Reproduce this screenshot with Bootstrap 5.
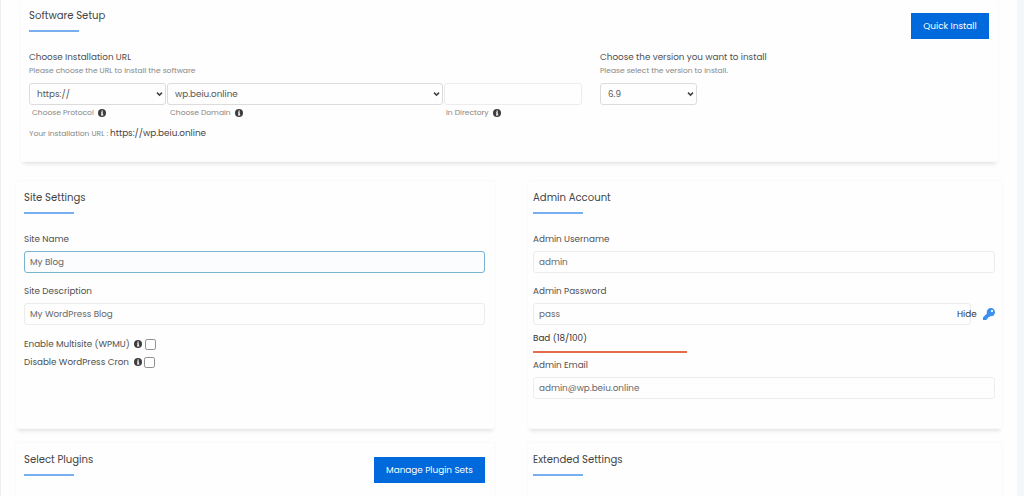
<!DOCTYPE html>
<html lang="en">
<head>
<meta charset="utf-8">
<meta name="viewport" content="width=device-width, initial-scale=1">
<title>Software Setup</title>
<link href="https://cdn.jsdelivr.net/npm/bootstrap@5.3.0/dist/css/bootstrap.min.css" rel="stylesheet">
<style>
  body { font-family: Poppins, Inter, "Open Sans", sans-serif; font-size: 8.8px; color: #505050; background: #f3f7fc; height: 496px; overflow: hidden; }
  .page { width: 1017px; height: 496px; background: #fefefe; border-left: 1px solid #eee; overflow: hidden; }
  .panel { background: #fefefe; border: 1px solid #fafafa; border-radius: 3px; box-shadow: 0 5px 4px -3px rgba(0,0,0,.11); }
  .setup { width: 979px; height: 162px; margin-left: 19px; padding: 8px 9px 0 8px; border-top: 0; }
  .pair { margin: 18px 0 0 14px; gap: 31px; }
  .pair .panel { height: 249px; padding: 9px 10px 0 8px; }
  .pair .panel:first-child { width: 481px; padding-right: 10px; }
  .pair .panel:last-child { width: 476px; padding: 9px 7px 0 5px; }
  .pair.lower { margin-top: 13px; }
  .title { font-size: 10.1px; font-weight: 400; line-height: 15px; margin: 0; color: #444; }
  .title::after { content: ""; display: block; width: 50px; height: 2px; margin-top: 7px; background: #77aef0; }
  .lbl { font-size: 8.8px; line-height: 14px; display: block; }
  .hint { font-size: 7.55px; line-height: 12px; color: #868686; }
  .form-control, .form-select { font-size: 8.8px; line-height: 14px; height: 22px; min-height: 0; padding: 3px 5px; color: #686868; background-color: #fefefe; border: 1px solid #ececec; border-radius: 3px; }
  .form-select { padding-left: 7px; color: #555; border-color: #dcdcdc; background-size: 7px 6px; background-position: right 2px center;
    background-image: url("data:image/svg+xml,%3Csvg xmlns='http://www.w3.org/2000/svg' viewBox='0 0 7 6'%3E%3Cpath d='M1 1.6l2.5 2.5L6 1.6' fill='none' stroke='%23444' stroke-width='1.5'/%3E%3C/svg%3E"); }
  .form-control.current { border-color: #78b4d0; background: #fafcfe; }
  .btn-main { font-size: 8.9px; line-height: 14px; padding: 6px 0; height: 26px; border: 0; border-radius: 0; background: #0069db; color: #fff; }
  .info { width: 8px; height: 8px; flex: none; }
  .form-check-input { width: 11px; height: 11px; margin: 0; border: 1px solid #909090; border-radius: 2px; }
  .url { font-size: 8.85px; color: #444; }
  .spaced > .form-control, .spaced > .position-relative { margin-top: 5px; }
  .hide-link { position: absolute; left: 424px; top: 4px; font-size: 8.8px; line-height: 14px; color: #333; }
  .key { position: absolute; left: 450px; top: 5px; width: 12px; height: 12px; }
  .strength { width: 154px; height: 2px; margin-top: 6px; background: #e66b48; }
</style>
</head>
<body>
<svg class="d-none"><symbol id="info" viewBox="0 0 16 16"><circle cx="8" cy="8" r="8" fill="#3d3d3d"/><path d="M7 3h2.6v2.3H7zM6 6.7h3.6v4.2h1V13H6v-2.1h1V8.6H6z" fill="#fff"/></symbol></svg>
<main class="page">
  <section class="panel setup">
    <div class="d-flex justify-content-between">
      <h2 class="title">Software Setup</h2>
      <button class="btn btn-main" style="width:78px;margin-top:5px">Quick Install</button>
    </div>
    <div class="d-flex" style="margin-top:11px">
      <div style="width:571px">
        <span class="lbl">Choose Installation URL</span>
        <div class="hint" style="margin-top:1px">Please choose the URL to install the software</div>
        <div class="d-flex" style="gap:1px;margin-top:6px">
          <div style="width:137px"><select class="form-select" aria-label="Protocol"><option>https://</option></select>
            <div class="hint d-flex align-items-center" style="gap:4px;padding:2px 0 0 3px">Choose Protocol <svg class="info"><use href="#info"/></svg></div></div>
          <div style="width:276px"><select class="form-select" aria-label="Domain"><option>wp.beiu.online</option></select>
            <div class="hint d-flex align-items-center" style="gap:4px;padding:2px 0 0 3px">Choose Domain <svg class="info"><use href="#info"/></svg></div></div>
          <div style="width:138px"><input class="form-control" aria-label="Directory">
            <div class="hint d-flex align-items-center" style="gap:4px;padding:2px 0 0 2px">In Directory <svg class="info"><use href="#info"/></svg></div></div>
        </div>
        <div class="hint d-flex align-items-baseline" style="gap:2px;margin-top:8px"><span>Your installation URL :</span><span class="url">https://wp.beiu.online</span></div>
      </div>
      <div>
        <span class="lbl">Choose the version you want to install</span>
        <div class="hint" style="margin-top:1px">Please select the version to install.</div>
        <select class="form-select" style="width:97px;margin-top:6px" aria-label="Version"><option>6.9</option></select>
      </div>
    </div>
  </section>

  <div class="d-flex pair">
    <section class="panel">
      <h2 class="title">Site Settings</h2>
      <div class="spaced" style="margin-top:18px"><label class="lbl">Site Name</label><input class="form-control current" value="My Blog"></div>
      <div class="spaced" style="margin-top:11px"><label class="lbl">Site Description</label><input class="form-control" value="My WordPress Blog"></div>
      <div class="d-flex align-items-center" style="margin-top:12px;height:14px"><span class="lbl" style="width:110px">Enable Multisite (WPMU)</span><svg class="info"><use href="#info"/></svg><input type="checkbox" class="form-check-input" style="margin-left:3px"></div>
      <div class="d-flex align-items-center" style="margin-top:4px;height:14px"><span class="lbl" style="width:110px">Disable WordPress Cron</span><svg class="info"><use href="#info"/></svg><input type="checkbox" class="form-check-input" style="margin-left:2px"></div>
    </section>
    <section class="panel">
      <h2 class="title">Admin Account</h2>
      <div class="spaced" style="margin-top:18px"><label class="lbl">Admin Username</label><input class="form-control" value="admin"></div>
      <div class="spaced" style="margin-top:11px"><label class="lbl">Admin Password</label>
        <div class="position-relative"><input class="form-control" style="width:438px" value="pass"><span class="hide-link">Hide</span>
          <svg class="key" viewBox="0 0 512 512" fill="#3990ed"><path d="M512 176c0 97-79 176-176 176-11 0-22-1-33-3l-24 27c-5 5-11 8-18 8h-37v40c0 13-11 24-24 24h-40v40c0 13-11 24-24 24H24c-13 0-24-11-24-24v-78c0-6 3-12 7-17l162-162c-6-17-9-36-9-55C160 79 239 0 336 0s176 79 176 176zM336 128a48 48 0 1 0 96 0 48 48 0 1 0-96 0z"/></svg></div></div>
      <div class="lbl" style="margin-top:6px;color:#333">Bad (18/100)</div>
      <div class="strength"></div>
      <div class="spaced" style="margin-top:5px"><label class="lbl">Admin Email</label><input class="form-control" value="admin@wp.beiu.online"></div>
    </section>
  </div>

  <div class="d-flex pair lower">
    <section class="panel">
      <div class="d-flex justify-content-between"><h2 class="title">Select Plugins</h2><button class="btn btn-main" style="width:111px;margin-top:5px">Manage Plugin Sets</button></div>
    </section>
    <section class="panel"><h2 class="title">Extended Settings</h2></section>
  </div>
</main>
<script src="https://cdn.jsdelivr.net/npm/bootstrap@5.3.0/dist/js/bootstrap.bundle.min.js"></script>
</body>
</html>
